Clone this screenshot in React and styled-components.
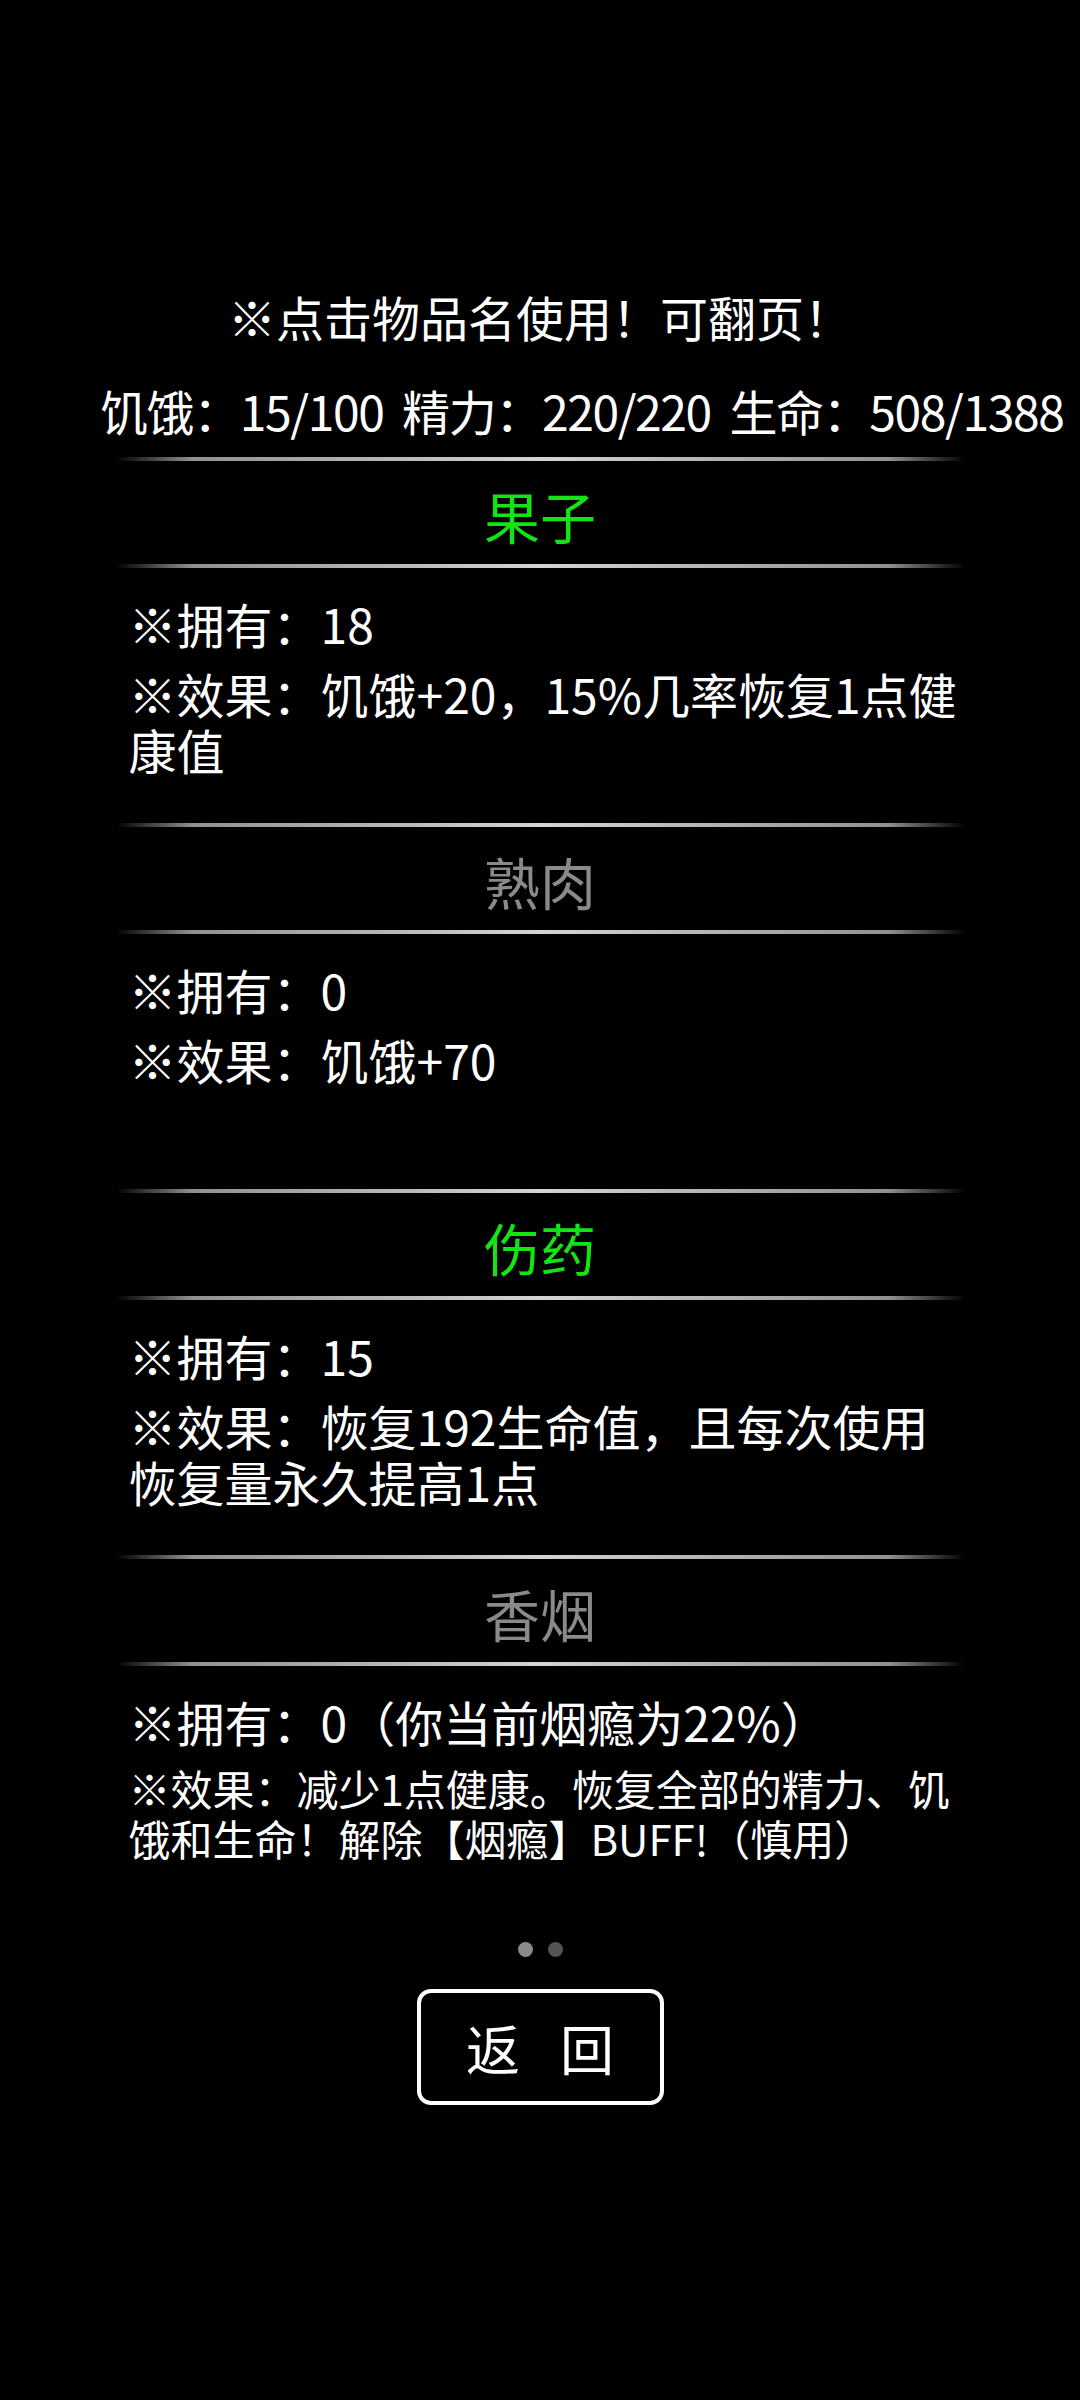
import React from 'react';
import styled, { createGlobalStyle } from 'styled-components';

const GlobalStyle = createGlobalStyle`
  html, body {
    margin: 0;
    padding: 0;
    background: #000;
  }
  body {
    font-family: "Noto Sans CJK SC", "Noto Sans", sans-serif;
    color: #fff;
  }
`;

const Page = styled.div`
  width: 1080px;
  min-height: 2400px;
  background: #000;
  display: flex;
  flex-direction: column;
  align-items: center;
  padding-top: 288px;
  box-sizing: border-box;
`;

const Hint = styled.div`
  font-size: 48px;
  line-height: 56px;
  color: #fff;
`;

const Stats = styled.div`
  align-self: stretch;
  padding-left: 100px;
  margin-top: 38px;
  font-size: 48px;
  line-height: 56px;
  letter-spacing: -1.4px;
  white-space: nowrap;
`;

const ItemList = styled.div`
  width: 849px;
  margin-top: 19px;
  display: flex;
  flex-direction: column;
`;

const Divider = styled.div`
  height: 4px;
  border-radius: 2px;
  background: linear-gradient(
    to right,
    rgba(160, 160, 160, 0) 0%,
    rgba(170, 170, 170, 0.85) 9%,
    #d4d4d4 50%,
    rgba(170, 170, 170, 0.85) 91%,
    rgba(160, 160, 160, 0) 100%
  );
`;

const Section = styled.div`
  display: flex;
  flex-direction: column;
  height: 366px;
`;

const ItemName = styled.div`
  height: 98px;
  padding-top: 5px;
  line-height: 98px;
  text-align: center;
  font-size: 56px;
  color: ${(p) => (p.$active ? '#14e414' : '#8a8a8a')};
  cursor: pointer;
`;

const Details = styled.div`
  flex: 1;
  display: flex;
  flex-direction: column;
  gap: 14px;
  padding: 27px 6px 0 13px;
`;

const Line = styled.div`
  font-size: ${(p) => (p.$small ? '42px' : '48px')};
  line-height: ${(p) => (p.$small ? '50px' : '56px')};
  color: #fff;
`;

const Pager = styled.div`
  display: flex;
  gap: 15px;
  margin-top: 21px;
`;

const Dot = styled.span`
  width: 15px;
  height: 15px;
  border-radius: 50%;
  background: ${(p) => (p.$current ? '#8a8a8a' : '#555')};
`;

const BackButton = styled.button`
  margin-top: 32px;
  width: 247px;
  height: 116px;
  box-sizing: border-box;
  border: 4px solid #fff;
  border-radius: 14px;
  background: #000;
  color: #fff;
  font-family: "Noto Sans CJK SC", sans-serif;
  font-size: 54px;
  word-spacing: 28px;
  padding: 0;
`;

const items = [
  {
    name: '果子',
    count: '18',
    effect: '饥饿+20，15%几率恢复1点健康值',
  },
  {
    name: '熟肉',
    count: '0',
    effect: '饥饿+70',
  },
  {
    name: '伤药',
    count: '15',
    effect: '恢复192生命值，且每次使用恢复量永久提高1点',
  },
  {
    name: '香烟',
    count: '0',
    countNote: '（你当前烟瘾为22%）',
    effect: '减少1点健康。恢复全部的精力、饥饿和生命！解除【烟瘾】BUFF!（慎用）',
    small: true,
  },
];

export default function App() {
  return (
    <>
      <GlobalStyle />
      <Page>
        <Hint>※点击物品名使用！可翻页！</Hint>
        <Stats>饥饿：15/100&nbsp; 精力：220/220&nbsp; 生命：508/1388</Stats>
        <ItemList>
          {items.map((item) => (
            <Section key={item.name}>
              <Divider />
              <ItemName $active={item.count !== '0'}>{item.name}</ItemName>
              <Divider />
              <Details>
                <Line>※拥有：{item.count}{item.countNote}</Line>
                <Line $small={item.small}>※效果：{item.effect}</Line>
              </Details>
            </Section>
          ))}
        </ItemList>
        <Pager>
          <Dot $current />
          <Dot />
        </Pager>
        <BackButton>返 回</BackButton>
      </Page>
    </>
  );
}
